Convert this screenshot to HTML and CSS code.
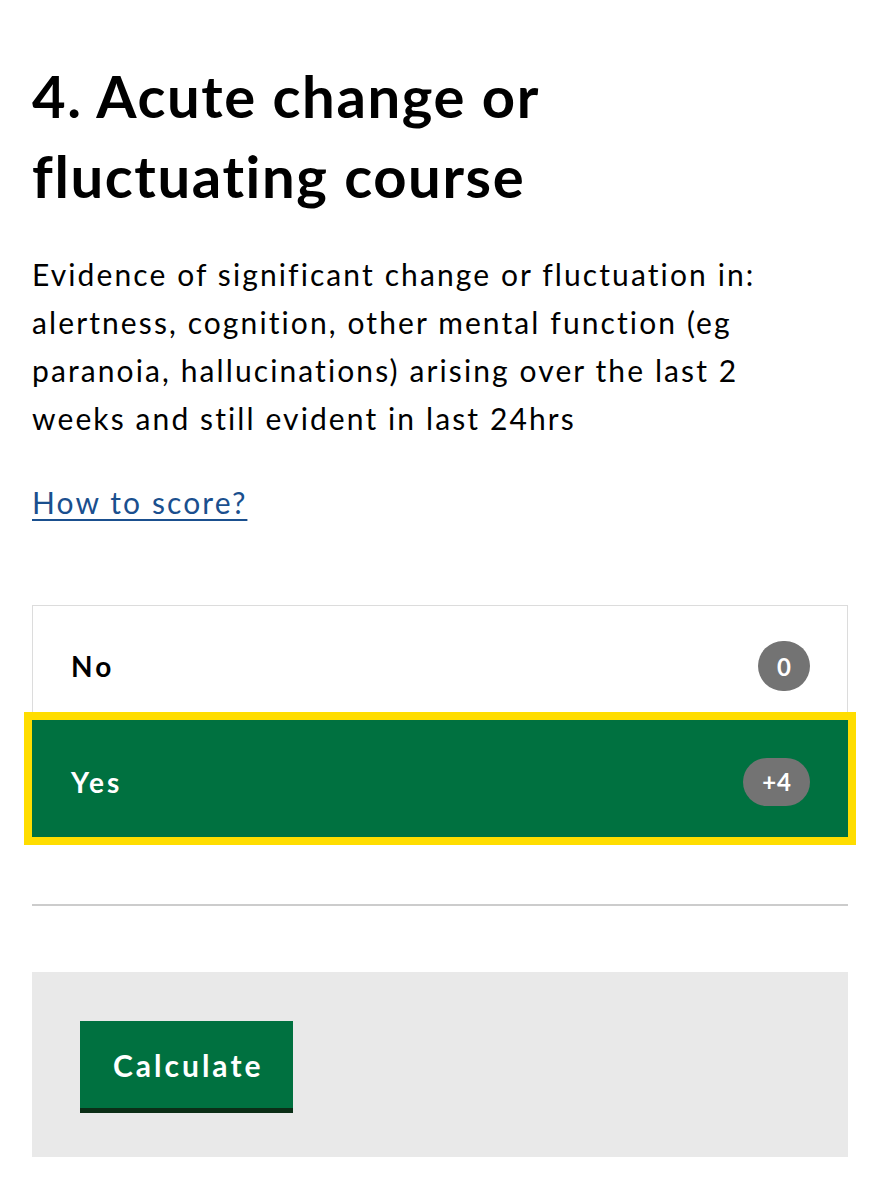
FILE: index.html
```html
<!DOCTYPE html>
<html lang="en">
<head>
<meta charset="utf-8">
<title>Acute change or fluctuating course</title>
<link rel="stylesheet" href="styles.css">
</head>
<body>
<main class="page">
  <h1 class="title">4. Acute change or fluctuating course</h1>
  <p class="desc">Evidence of significant change or fluctuation in: alertness, cognition, other mental function (eg paranoia, hallucinations) arising over the last 2 weeks and still evident in last 24hrs</p>
  <a class="how" href="#">How to score?</a>
  <div class="options">
    <div class="option">
      <span class="label">No</span>
      <span class="badge">0</span>
    </div>
    <div class="option selected">
      <span class="label">Yes</span>
      <span class="badge">+4</span>
    </div>
  </div>
  <hr class="divider">
  <div class="calc-box">
    <button class="calc-btn" type="button">Calculate</button>
  </div>
</main>
</body>
</html>
```

FILE: styles.css
```css
* { box-sizing: border-box; }

body {
  margin: 0;
  background: #ffffff;
  color: #0b0c0c;
  font-family: Lato, "Noto Sans", sans-serif;
}

.page {
  padding: 56px 32px 0;
}

.title {
  margin: 0;
  font-size: 58px;
  line-height: 80px;
  font-weight: 700;
  letter-spacing: 1.6px;
  color: #000;
  max-width: 600px;
}

.desc {
  margin: 34px 0 0;
  max-width: 800px;
  font-size: 30px;
  line-height: 48px;
  letter-spacing: 2.1px;
  color: #000;
}

.how {
  display: inline-block;
  margin-top: 36px;
  font-size: 30px;
  line-height: 48px;
  letter-spacing: 2.1px;
  color: #1a4f8e;
  text-decoration: underline;
  text-decoration-thickness: 2px;
  text-underline-offset: 5px;
}

.options {
  margin-top: 79px;
  border: 1px solid #dcdcdc;
  border-bottom: none;
}

.option {
  display: flex;
  align-items: center;
  justify-content: space-between;
  height: 114px;
  padding: 6px 37px 0 38px;
  font-size: 28px;
  font-weight: 700;
  letter-spacing: 3px;
  color: #000;
}

.option.selected {
  height: 117px;
  margin: 0 -1px;
  background: #007140;
  color: #fff;
  outline: 8px solid #ffdd00;
  padding-right: 38px;
  padding-left: 39px;
}

.badge {
  display: inline-flex;
  align-items: center;
  justify-content: center;
  min-width: 52px;
  height: 50px;
  padding: 0 18px 0 19px;
  border-radius: 25px;
  background: #737373;
  color: #fff;
  font-size: 24px;
  font-weight: 700;
  letter-spacing: 1px;
}

.option.selected .badge {
  height: 48px;
}

.divider {
  margin: 67px 0 0;
  border: none;
  height: 2px;
  background: #cccccc;
}

.calc-box {
  margin-top: 66px;
  background: #e9e9e9;
  padding: 49px 48px 44px;
}

.calc-btn {
  display: block;
  height: 92px;
  padding: 0 30px 0 33px;
  border: none;
  border-bottom: 5px solid #0b2e17;
  background: #007140;
  color: #fff;
  font-family: Lato, "Noto Sans", sans-serif;
  font-size: 30px;
  font-weight: 700;
  letter-spacing: 3px;
  cursor: pointer;
}
```
